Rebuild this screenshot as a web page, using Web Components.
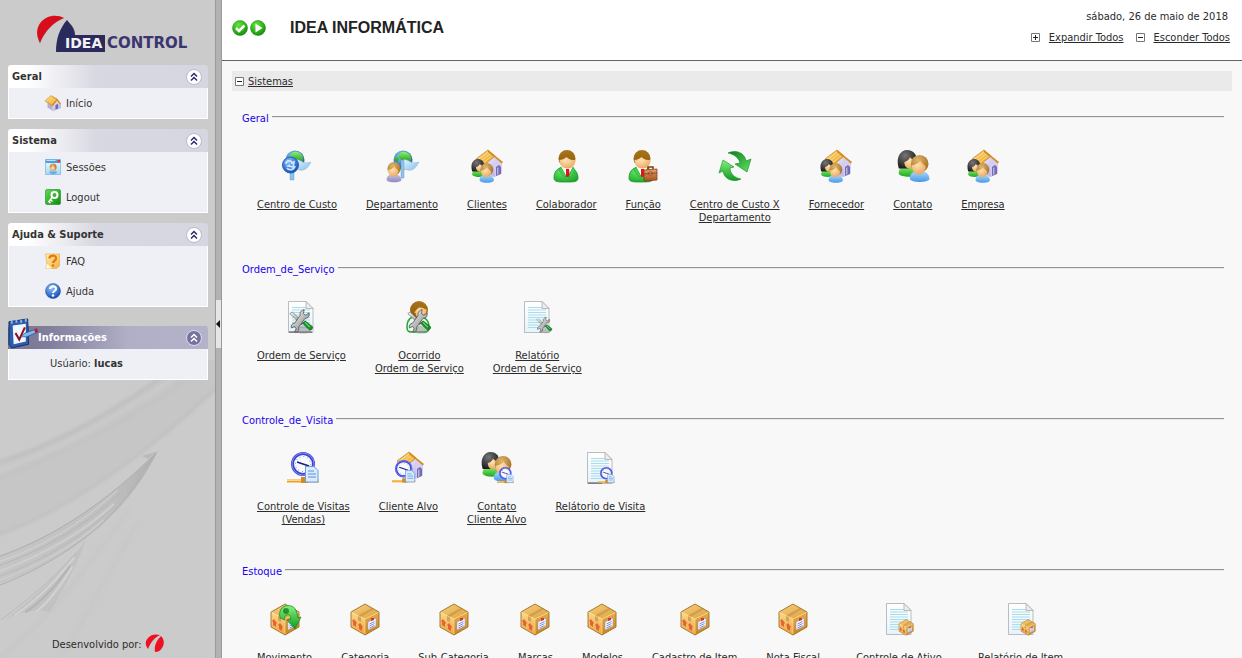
<!DOCTYPE html>
<html lang="pt-BR">
<head>
<meta charset="utf-8">
<meta name="viewport" content="width=device-width, initial-scale=1">
<title>IDEA Control</title>
<style>
html, body { height: 100%; margin: 0; }
body {
  background: #f8f8f8;
  color: #2b2b2b;
  font: 11px/13px "DejaVu Sans Condensed", "DejaVu Sans", Tahoma, sans-serif;
}
</style>
</head>
<body>
<idea-app>
  <idea-sidebar slot="side">
    <idea-panel heading="Geral">
      <idea-menu-item icon="home">Início</idea-menu-item>
    </idea-panel>
    <idea-panel heading="Sistema">
      <idea-menu-item icon="sessions">Sessões</idea-menu-item>
      <idea-menu-item icon="logout">Logout</idea-menu-item>
    </idea-panel>
    <idea-panel heading="Ajuda &amp; Suporte">
      <idea-menu-item icon="faq">FAQ</idea-menu-item>
      <idea-menu-item icon="help">Ajuda</idea-menu-item>
    </idea-panel>
    <idea-panel heading="Informações" featured>
      <idea-user>Usúario: <b>lucas</b></idea-user>
    </idea-panel>
  </idea-sidebar>
  <idea-header slot="header" heading="IDEA INFORMÁTICA" date="sábado, 26 de maio de 2018"></idea-header>
  <idea-tree heading="Sistemas">
    <idea-group heading="Geral">
      <idea-shortcut icon="costcenter">Centro de Custo</idea-shortcut>
      <idea-shortcut icon="department">Departamento</idea-shortcut>
      <idea-shortcut icon="clients">Clientes</idea-shortcut>
      <idea-shortcut icon="employee">Colaborador</idea-shortcut>
      <idea-shortcut icon="role">Função</idea-shortcut>
      <idea-shortcut icon="refresh">Centro de Custo X<br>Departamento</idea-shortcut>
      <idea-shortcut icon="clients">Fornecedor</idea-shortcut>
      <idea-shortcut icon="contact">Contato</idea-shortcut>
      <idea-shortcut icon="clients">Empresa</idea-shortcut>
    </idea-group>
    <idea-group heading="Ordem_de_Serviço">
      <idea-shortcut icon="order">Ordem de Serviço</idea-shortcut>
      <idea-shortcut icon="occurrence">Ocorrido<br>Ordem de Serviço</idea-shortcut>
      <idea-shortcut icon="orderreport">Relatório<br>Ordem de Serviço</idea-shortcut>
    </idea-group>
    <idea-group heading="Controle_de_Visita">
      <idea-shortcut icon="visit">Controle de Visitas<br>(Vendas)</idea-shortcut>
      <idea-shortcut icon="visitclient">Cliente Alvo</idea-shortcut>
      <idea-shortcut icon="visitcontact">Contato<br>Cliente Alvo</idea-shortcut>
      <idea-shortcut icon="visitreport">Relátorio de Visita</idea-shortcut>
    </idea-group>
    <idea-group heading="Estoque">
      <idea-shortcut icon="movement">Movimento</idea-shortcut>
      <idea-shortcut icon="box">Categoria</idea-shortcut>
      <idea-shortcut icon="box">Sub-Categoria</idea-shortcut>
      <idea-shortcut icon="box">Marcas</idea-shortcut>
      <idea-shortcut icon="box">Modelos</idea-shortcut>
      <idea-shortcut icon="box">Cadastro de Item</idea-shortcut>
      <idea-shortcut icon="box">Nota Fiscal</idea-shortcut>
      <idea-shortcut icon="itemreport" wide>Controle de Ativo</idea-shortcut>
      <idea-shortcut icon="itemreport">Relatório de Item</idea-shortcut>
    </idea-group>
  </idea-tree>
</idea-app>

<script>
/* ---------- icon artwork, on a 32 x 32 grid ---------- */
const lin = (id, a, b, d = '') =>
  `<linearGradient id="${id}" x1="0" y1="0" x2="${d ? 1 : 0}" y2="1"><stop stop-color="${a}"/><stop offset="1" stop-color="${b}"/></linearGradient>`;
const rad = (id, a, b) =>
  `<radialGradient id="${id}" cx=".4" cy=".3" r=".75"><stop stop-color="${a}"/><stop offset="1" stop-color="${b}"/></radialGradient>`;

const DEFS = '<defs>' +
  lin('roof', '#ffdc7c', '#e89a1c', 1) + lin('wall', '#f4f2ff', '#a9a2dc', 1) +
  rad('skin', '#ffe3b4', '#e9a55c') + lin('hairB', '#a87419', '#8c5a0c') + rad('hairK', '#777', '#151515') +
  rad('hairL', '#e0b66c', '#a06a1e') +
  lin('green', '#8cf070', '#20a824') + lin('blue', '#a8dcff', '#4c98e6') + lin('lilac', '#c9c4e4', '#9088bc') +
  rad('suit', '#6bf06a', '#1ea52c') + rad('orb', '#8fc4ff', '#0b46b0') + rad('earth', '#8fd0fa', '#0d49a0') +
  lin('land', '#8cf06c', '#128a18') + lin('flag', '#e4f6ff', '#84bce8', 1) +
  lin('arrow', '#86f27e', '#0f9a20') + lin('arrowD', '#0b7c18', '#5fe468', 1) +
  lin('page', '#ffffff', '#e6f3f8') + lin('case', '#e8a070', '#a8501c') +
  lin('boxT', '#f6cf80', '#dfa03c', 1) + lin('boxL', '#fbd78a', '#eba842') + lin('boxR', '#e6ac4c', '#c98420') +
  lin('metal', '#fafafa', '#7c7c7c', 1) + lin('note', '#fff0a8', '#f8b040', 1) +
  lin('key', '#5fdc50', '#0c8c10', 1) + lin('win', '#f4fcff', '#a4d8f4') +
  rad('go', '#62e83c', '#118a08') + '</defs>';

const at = (x, y, s, art) => `<g transform="translate(${x} ${y}) scale(${s})">${art}</g>`;

const bust = (hair, shirt) =>
  `<path d="M1 26c-1-6 4-9 10-9s11 3 11 9c-3 4-18 4-21 0z" fill="url(#${shirt})"/>
   <circle cx="11.500" cy="9.500" r="9.500" fill="url(#${hair})"/>
   <path d="M3 11c4 0 7-2 9-5 2 3 4 5 6 6 0 5-3 9-7.500 9S3 17 3 11z" fill="url(#skin)"/>`;

const bustDark =
  `<path d="M2 26c-1-6 4-9 10-9s11 3 11 9c-3 4-18 4-21 0z" fill="url(#green)"/>
   <path d="M2 20C-2 8 4 0 11 0c6 0 10 4 10 9l-8 11z" fill="url(#hairK)"/>
   <path d="M8 13c4-1 5-3 6-5 2 2 4 3 7 3 0 6-2 9-6 9-4 1-7-2-7-7z" fill="url(#skin)"/>`;

const house =
  `<path d="M12 14l11-7 8 6v10l-8 4-11-5z" fill="url(#wall)"/>
   <path d="M23 8l8 6v9l-7 4z" fill="#d4cff2"/>
   <path d="M25 17l3-2 2 2v7l-5 2z" fill="#736cae"/><path d="M26 18l1.500-1v7L26 25z" fill="#b9b3e2"/>
   <path d="M5 9L17 0l7 6-12 10z" fill="url(#roof)" stroke="#bd7b18" stroke-width=".7"/>
   <path d="M17 0l15 12-1 1.500L23 7l-6-5z" fill="#d58a1d"/>
   <path d="M8 9l9-7M10 11l9-7M12 13l9-7" stroke="#fff1b4" stroke-width=".8" opacity=".7"/>`;

const homeIcon =
  `<path d="M5 14l10 7v10L5 25z" fill="#b4aee0"/><path d="M14 20l10-10 7 8v8l-16 6z" fill="url(#wall)" stroke="#9d96cc" stroke-width=".6"/>
   <path d="M21 20l5-2v9l-5 2z" fill="#6e67ac"/>
   <path d="M0 12L12 1l13 8-10 13z" fill="url(#roof)" stroke="#c07c14"/>
   <path d="M12 1l13 7 7 9-2 2-6-8-8 11-2-2 9-11z" fill="#da8d1c"/>
   <path d="M4 12l9-8M8 14l9-8M12 17l8-9" stroke="#fff4bc" stroke-width="1.200" opacity=".8"/>`;

const globe =
  `<circle cx="14" cy="10" r="9.500" fill="url(#earth)"/>
   <path d="M11 3c4-3 10 0 11 4 1 3-1 6-3 5-1 3-3 1-4-1-3 0-3-2-5-3-1-2-1-4 1-5zM5 9l3-3 2 3-2 3z" fill="url(#land)"/>`;
const flag =
  `<path d="M14 10c6-2 7 5 16 2-2 4-5 8-8 8-3 1-5-1-8-1z" fill="url(#flag)" stroke="#86b7dc" stroke-width=".5"/>`;

const employee =
  `<path d="M4 28c0-8 5-11 12-11s12 4 12 11c0 4-4 4-12 4s-12 0-12-4z" fill="url(#suit)" stroke="#1a9428" stroke-width=".8"/>
   <path d="M11 17h12l-6 11z" fill="#fff"/><path d="M16 19h3l1 8h-4z" fill="#e2131c"/>
   <path d="M11 17l6 11-4-2-4-6zM23 17l-5 11 4-2 3-6z" fill="#49cf50" stroke="#1b9a2b" stroke-width=".5"/>
   <circle cx="17" cy="8.500" r="8.500" fill="url(#hairB)"/>
   <path d="M9.500 10c2 0 5-1 7-3 3 3 6 3 9 3 0 5-3.500 8.500-8 8.500S9.500 15 9.500 10z" fill="url(#skin)"/>`;

const lines = y => { let s = ''; for (let i = y; i < 28; i += 2.5) s += `<path d="M7 ${i}h18" stroke="#a9dced" stroke-width="1"/>`; return s; };
const page =
  `<path d="M3.500.5H21l7 7V31.500H3.500z" fill="url(#page)" stroke="#b9bcc0"/>
   ${lines(6.5)}
   <path d="M21 .5l7 7h-7z" fill="#eee" stroke="#aaa" stroke-width=".8"/>`;

const tools =
  `<ellipse cx="18" cy="27" rx="10" ry="5" fill="#888" opacity=".5"/>
   <path d="M1 7l3-2 14 13-2 3z" fill="url(#metal)" stroke="#555" stroke-width=".7"/>
   <path d="M17 19l3-3 9 7c2 2-2 6-4 4z" fill="#189028" stroke="#0b5a14" stroke-width=".8"/>
   <path d="M20 18l6 6" stroke="#72e26e" stroke-width="1.300"/>
   <path d="M19 2c-4 1-6 4-5 7l-7 10c-3 0-5 3-4 6l4-2 2 3-2 4c4 1 6-3 5-6l8-11c4 0 6-3 5-7l-4 3-3-2z" fill="url(#metal)" stroke="#444" stroke-width=".9"/>`;

const clock =
  `<path d="M0 27.500h32v3H0z" fill="#eda12c"/><path d="M0 28.500h32" stroke="#ffdb85"/><path d="M14 25h7v6h-7z" fill="#d68b18"/>
   <circle cx="16" cy="12" r="10.500" fill="#f7faff" stroke="#3a41d4" stroke-width="3"/>
   <circle cx="16" cy="12" r="11" fill="none" stroke="#9a9dff" stroke-width=".8"/>
   <circle cx="16" cy="12" r="7.500" fill="none" stroke="#7b86d0" stroke-width="1" stroke-dasharray="1 2.930"/>
   <path d="M10 10l6 2 6 2" fill="none" stroke="#1c2070" stroke-width="1.500"/>
   <path d="M18.500 14.500H27l4 4V30H18.500z" fill="#d9ecff" stroke="#6b9be0"/>
   <path d="M21 19h6M21 22h8M21 25h8" stroke="#5d90da"/>`;

const box =
  `<path d="M16 1l14 8-14 7L2 9z" fill="url(#boxT)"/><path d="M2 9l14 7v16L2 24z" fill="url(#boxL)"/>
   <path d="M30 9l-14 7v16l14-8z" fill="url(#boxR)"/>
   <path d="M9 12.500L23 5l2 1-13 8v5l-3-1.500z" fill="#c99545" opacity=".75"/>
   <path d="M3 18l2-2 3 4-1 1v3l-3-2v-3zM9 22l2-2 3 4-1 1v3l-3-2v-3z" fill="#e2542f" opacity=".85"/>
   <path d="M19 19l8-4v8l-8 4z" fill="#f4f5ff" stroke="#8f98c4" stroke-width=".5"/>
   <path d="M20.500 21l5-2.500M20.500 23l5-2.500M20.500 25l5-2.500" stroke="#6676c4" stroke-width=".8"/>
   <path d="M22 15h3v2l-3 1z" fill="#d43434"/>
   <path d="M16 1l14 8v15l-14 8L2 24V9z" fill="none" stroke="#a26d22" stroke-width=".9"/>
   <path d="M2.500 9.500L16 16l13.500-6.500M16 16v15" fill="none" stroke="#ffe5a4" stroke-width=".6"/>`;

const disc = inner => `<circle cx="16" cy="16" r="15" fill="url(#go)" stroke="#138006"/>${inner}`;

const ART = {
  home: homeIcon,
  sessions: `<path d="M1 1h30v30H1z" fill="url(#win)" stroke="#5aa0d0"/><path d="M1 1h30v7H1z" fill="#4f9fdc"/><path d="M25 2h5v5h-5z" fill="#e03a3a"/><path d="M3 3h18" stroke="#b9e2fb" stroke-width="2"/>` + at(8, 9, .72, bust('hairL', 'blue')),
  logout: `<rect x="1" y="1" width="30" height="30" rx="3" fill="url(#key)" stroke="#0c7410"/><circle cx="19" cy="12" r="6" fill="none" stroke="#fff" stroke-width="4"/><path d="M15 16l-8 10M10 21l5 4M7 25l4 3" stroke="#fff" stroke-width="3" fill="none"/>`,
  faq: `<path d="M1 2h28v24l-6 5H1l3-8z" fill="url(#note)" stroke="#dc9a30"/><path d="M1 31l4-9 9 9z" fill="#fffbe0"/><path d="M9 11c0-8 14-8 13 0 0 5-6 4-6 9" fill="none" stroke="#e07812" stroke-width="4.500"/><circle cx="16" cy="25" r="2.700" fill="#e07812"/>`,
  help: `<circle cx="16" cy="16" r="15" fill="url(#orb)" stroke="#184ca4"/><path d="M10 12c0-7 13-7 12 0 0 4-6 4-6 8" fill="none" stroke="#fff" stroke-width="4.200"/><circle cx="16" cy="25" r="2.500" fill="#fff"/>`,
  check: disc('<path d="M8 16l6 6 11-11" fill="none" stroke="#fff" stroke-width="5"/>'),
  play: disc('<path d="M11 7l14 9-14 9z" fill="#fff"/>'),
  notepad: `<path d="M1 4L21 1l1 27L4 32 1 28z" fill="#2b5cae" stroke="#12305f"/><path d="M5 8l14-2v19L6 28z" fill="#f2f7ff"/><path d="M3 3h2v3H3zM8 2h2v3H8zM13 2h2v3h-2zM18 1h2v3h-2z" fill="#8fb4ec"/><path d="M8 16l4 7 6-13" fill="none" stroke="#8c1020" stroke-width="2.200"/><path d="M14 20l4-4 12-4 2 3-12 5z" fill="#7db8ee" stroke="#2458a0" stroke-width=".8"/><path d="M28 12l3-1 1 4-3 1z" fill="#c41c24"/>`,
  costcenter: globe + flag + '<path d="M9 20h4v10H9z" fill="#8bc4ec" stroke="#5a96c8" stroke-width=".4"/><circle cx="9.500" cy="15" r="8" fill="url(#orb)" stroke="#2560b8"/><path d="M5 14c0-4 6-4 6-1l2-1-1 5-5-1 2-1M14 16c-1 4-6 5-8 2" fill="none" stroke="#cfe6ff" stroke-width="1.600"/>',
  department: at(3, 0, 1, globe + flag + '<path d="M12 10h3v18h-3z" fill="#8bc4ec" stroke="#5a96c8" stroke-width=".4"/>') + at(0, 12, .7, bust('hairL', 'lilac')),
  clients: house + at(0, 9, .62, bustDark) + at(8, 13, .68, bust('hairL', 'blue')),
  employee: employee,
  role: at(-2, 0, 1, employee) + '<path d="M21 19v-2h5v2" fill="none" stroke="#7c3a14" stroke-width="1.500"/><path d="M17 20l13-1v11l-13 1z" fill="url(#case)" stroke="#8a4317" stroke-width=".8"/><path d="M17 24l13-1M22 22h3v3h-3z" stroke="#7a3a12" fill="#f3c27a" stroke-width=".7"/>',
  contact: at(0, 0, .92, bustDark) + at(12, 5, .93, bust('hairL', 'blue')),
  refresh: `<path d="M9 3c8-4 17 0 18 8l5-2-4 13-12-8 5-1C20 8 15 4 9 3z" fill="url(#arrowD)" stroke="#0e8a1e" stroke-width=".6"/><path d="M22 29c-8 4-17 0-18-8l-4 2L4 10l11 7-4 1c0 6 5 10 11 11z" fill="url(#arrow)" stroke="#0e8a1e" stroke-width=".6"/>`,
  order: page + '<path d="M4 31h23" stroke="#444"/>' + at(4, 7, .8, tools),
  occurrence: `<path d="M4 26c0-8 5-11 11-11s11 4 11 11c0 6-3 5-11 5s-11 1-11-5z" fill="#eafaea" stroke="#28a838" stroke-width="1.500"/><circle cx="16" cy="9" r="9" fill="url(#hairB)"/><path d="M11 12h12c1-3 1-4 0-4-3 0-5 0-7-2-2 3-4 3-5 6z" fill="#e9a55c"/><circle cx="18" cy="12" r="5.500" fill="url(#skin)"/>` + at(4, 7, .8, tools),
  orderreport: page + at(15, 15, .54, tools),
  visit: clock,
  visitclient: house + at(0, 8, .73, clock),
  visitcontact: at(0, 0, .85, bustDark) + at(12, 4, .88, bust('hairL', 'blue')) + at(16, 15, .52, clock),
  visitreport: page + '<path d="M4 31h14" stroke="#444"/>' + at(14, 15, .52, clock),
  box: box,
  movement: box + '<path d="M11 15c-2-9 4-14 11-12 5 1 6 7 7 12l3-1-6 12-8-9 4-1c-1-4-2-5-4-4-2 0-3 3-2 5z" fill="url(#arrow)" stroke="#108820" stroke-width=".7"/><circle cx="17" cy="8" r="3" fill="#0a7418" opacity=".7"/>',
  itemreport: page + at(15, 16, .51, box),
};

const plusMinus = plus =>
  `<svg class="pm" width="9" height="9" viewBox="0 0 9 9" aria-hidden="true"><path d="M.5.5h8v8h-8z" fill="#fff" stroke="#777"/><path d="M2 4.500h5${plus ? 'M4.500 2v5' : ''}" stroke="#222" fill="none"/></svg>`;

class Base extends HTMLElement {
  connectedCallback() {
    if (this.shadowRoot) return;
    this.attachShadow({ mode: 'open' }).innerHTML = this.render();
  }
}

/* ---------- elements ---------- */
customElements.define('idea-icon', class extends Base {
  render() {
    return `<style>:host { display: block; width: var(--icon, 32px); height: var(--icon, 32px); flex: none; }
      svg { display: block; width: 100%; height: 100%; overflow: visible; }</style>
      <svg viewBox="0 0 32 32" aria-hidden="true">${DEFS}${ART[this.getAttribute('name')] || ''}</svg>`;
  }
});

customElements.define('idea-app', class extends Base {
  render() {
    return `<style>
      :host { display: grid; grid-template-columns: 215px 7px minmax(0, 1fr); height: 100vh; overflow: hidden; }
      .split { box-sizing: border-box; background: #b2b2b2; border: solid #9a9a9a; border-width: 0 1px; display: flex; align-items: center; }
      .split button { width: 100%; height: 48px; margin: 0 0 10px; padding: 0; border: 0; background: #e6e6e6; display: flex; align-items: center; }
      main { display: flex; flex-direction: column; min-width: 0; height: 100vh; }
      .body { flex: 1; min-height: 0; overflow: auto; scrollbar-width: none; background: #f8f8f8; padding: 10px; }
    </style>
    <slot name="side"></slot>
    <div class="split"><button aria-label="Recolher menu"><svg width="4" height="8" viewBox="0 0 4 8"><path d="M4 0v8L0 4z" fill="#111"/></svg></button></div>
    <main><slot name="header"></slot><div class="body"><slot></slot></div></main>`;
  }
});

customElements.define('idea-sidebar', class extends Base {
  render() {
    return `<style>
      :host { display: flex; flex-direction: column; position: relative; overflow: hidden; background: #cbcbcb; height: 100vh; box-sizing: border-box; padding: 14px 7px 4px 8px; }
      .waves { position: absolute; left: 0; bottom: 0; width: 215px; height: 298px; }
      .logo { display: block; width: 156px; height: 40px; margin: 0 0 11px 28px; }
      nav { display: flex; flex-direction: column; gap: 10px; position: relative; }
      footer { margin-top: auto; padding-left: 44px; display: flex; align-items: center; gap: 3px; position: relative; height: 20px; }
      footer svg { display: block; }
    </style>
    <svg class="waves" viewBox="0 360 215 298" aria-hidden="true">
      <defs>
        <filter id="soft"><feGaussianBlur stdDeviation="1.500"/></filter>
        <filter id="fine"><feGaussianBlur stdDeviation=".5"/></filter>
        <linearGradient id="w2" x1="0" y1="0" x2="1" y2="0"><stop stop-color="#c2c2c2"/><stop offset=".7" stop-color="#b8b8b8"/><stop offset="1" stop-color="#9c9c9c"/></linearGradient>
      </defs>
      <g filter="url(#soft)">
        <path d="M-5 462C70 435 130 400 185 355h40v27C160 450 70 505-5 537z" fill="#c6c6c6"/>
        <g fill="none" stroke-width="3">
          <path d="M-5 463C60 444 120 408 172 370" stroke="#bfbfbf"/><path d="M-5 472C60 450 125 414 190 366" stroke="#cccccc"/>
          <path d="M-5 480C60 456 130 422 200 370" stroke="#c2c2c2"/>
          <path d="M-5 536C70 510 150 452 218 385" stroke="#c1c1c1"/>
          <path d="M0 658C60 610 90 560 130 510M60 658C90 610 110 570 140 520" stroke="#c6c6c6" stroke-width="6" opacity=".6"/>
        </g>
      </g>
      <g filter="url(#fine)">
        <path d="M158 451C130 505 90 550-2 585v-29C60 535 115 495 158 451z" fill="url(#w2)" opacity=".6"/>
        <path d="M142 456l16-5-10 8z" fill="#bbb"/>
        <g fill="none">
          <path d="M-2 557C60 535 110 498 156 453" stroke="#adadad"/><path d="M-2 562C50 545 90 516 118 490" stroke="#d2d2d2"/>
          <path d="M-2 566C50 548 92 520 120 493" stroke="#b4b4b4"/><path d="M-2 572C48 553 88 528 114 504" stroke="#cecece" stroke-width="2"/>
          <path d="M-2 577C50 558 88 532 114 507" stroke="#b8b8b8"/><path d="M-2 581C46 563 80 541 104 520" stroke="#cbcbcb" stroke-width="2"/>
          <path d="M-2 586C60 562 110 525 140 478" stroke="#b0b0b0"/>
        </g>
        <path d="M4 621C35 597 62 572 86 540 78 563 66 585 50 612 38 608 18 612 4 621z" fill="#bdbdbd" opacity=".6"/>
        <g fill="none" stroke-linecap="round"><path d="M2 619C35 595 58 573 76 553" stroke="#b9b9b9"/><path d="M15 615C42 597 58 577 74 558" stroke="#d2d2d2" stroke-width="2"/>
          <path d="M26 612C46 598 58 583 70 566" stroke="#b3b3b3" stroke-width="2"/><path d="M37 611C52 599 62 584 72 567" stroke="#d3d3d3" stroke-width="2"/></g>
      </g>
    </svg>
    <svg class="logo" viewBox="36 14 156 40" role="img" aria-label="IDEA Control">
      <path d="M40 44c-3-7-4-14 1-21 6-8 16-8 23-5-10 4-19 13-24 26z" fill="#888" opacity=".5"/>
      <path d="M40 43c-4-8-4-15 1-21 6-7 16-8 23-4-10 4-19 12-24 25z" fill="#d80d1c"/>
      <path d="M67 20l5 6c2 3 3 6 3 9h30v17H56c0-14 4-24 11-32z" fill="#2b2a5c"/>
      <text x="65" y="48" font-family="DejaVu Sans, Verdana, sans-serif" font-weight="bold" font-size="14" fill="#f2f2f6">IDEA</text>
      <text x="107" y="48" font-family="DejaVu Sans, Verdana, sans-serif" font-weight="bold" font-size="15" fill="#3c3670">CONTROL</text>
    </svg>
    <nav><slot></slot></nav>
    <footer><span>Desenvolvido por:</span>
      <svg width="20" height="20" viewBox="0 0 20 20" role="img" aria-label="IDEA"><path d="M3 15C0 11 0 7 3 4c3-4 8-4 12-3C9 4 6 8 3 15z" fill="#ee1020"/><path d="M10 18C9 12 11 7 16 2c3 3 4 8 1 12-2 3-4 4-7 4z" fill="#ee1020"/></svg>
    </footer>`;
  }
});

customElements.define('idea-panel', class extends Base {
  render() {
    const f = this.hasAttribute('featured');
    return `<style>
      :host { display: block; }
      :host([featured]) { margin-top: 9px; }
      header { box-sizing: border-box; height: 23px; display: flex; align-items: center; justify-content: space-between; padding: 0 6px 0 4px; border-radius: 3px 3px 0 0;
        background: linear-gradient(90deg, #fff 0, #fff 20px, #d8d8e2 88px, #d6d6e0 100%); color: #333; }
      :host([featured]) header { background: linear-gradient(90deg, #767492 0, #807e9c 40px, #b0afc6 120px, #b3b2c8 100%); color: #fff; padding-left: 0; }
      h2 { margin: 0; font-size: 11px; line-height: 13px; font-weight: bold; display: flex; align-items: center; }
      idea-icon { --icon: 30px; margin-top: -10px; }
      button { padding: 0; border: 0; background: none; width: 16px; height: 16px; }
      svg { display: block; overflow: visible; }
      .body { background: #eff0f5; border: solid #fff; border-width: 0 1px 1px; }
    </style>
    <header><h2>${f ? '<idea-icon name="notepad"></idea-icon>' : ''}<span>${this.getAttribute('heading').replace('&', '&amp;')}</span></h2>
      <button aria-label="Recolher"><svg width="16" height="16" viewBox="0 0 16 16"><circle cx="8" cy="8" r="7.500" fill="${f ? '#7473a0' : '#fff'}" stroke="${f ? '#dcdcf0' : '#b9b9cc'}"/><path d="M5 7.500l3-3 3 3M5 11.500l3-3 3 3" fill="none" stroke="${f ? '#fff' : '#2b2b6a'}" stroke-width="1.500"/></svg></button></header>
    <div class="body"><slot></slot></div>`;
  }
});

customElements.define('idea-menu-item', class extends Base {
  render() {
    return `<style>:host { display: block; --icon: 16px; }
      a { display: flex; align-items: center; gap: 5px; height: 30px; padding-left: 36px; color: #333; text-decoration: none; }</style>
      <a href="#"><idea-icon name="${this.getAttribute('icon')}"></idea-icon><span><slot></slot></span></a>`;
  }
});

customElements.define('idea-user', class extends Base {
  render() {
    return `<style>:host { display: block; line-height: 30px; padding-left: 41px; color: #333; }</style><slot></slot>`;
  }
});

customElements.define('idea-header', class extends Base {
  render() {
    return `<style>
      :host { display: flex; justify-content: space-between; flex: none; box-sizing: border-box; height: 61px; padding: 0 12px 0 10px; background: #fff; border-bottom: 1px solid #666; }
      .brand { display: flex; align-items: center; height: 56px; gap: 2px; --icon: 16px; }
      h1 { margin: 0 0 0 22px; font: bold 16px/20px "Liberation Sans", Arial, sans-serif; color: #222; }
      .tools { display: flex; flex-direction: column; align-items: flex-end; gap: 8px; padding-top: 10px; }
      time { padding-right: 2px; }
      .links { display: flex; gap: 12px; }
      a { display: flex; align-items: center; gap: 9px; color: inherit; text-decoration: none; }
      a span { text-decoration: underline; }
    </style>
    <div class="brand"><idea-icon name="check"></idea-icon><idea-icon name="play"></idea-icon><h1>${this.getAttribute('heading')}</h1></div>
    <div class="tools"><time datetime="2018-05-26">${this.getAttribute('date')}</time>
      <div class="links"><a href="#">${plusMinus(true)}<span>Expandir Todos</span></a><a href="#">${plusMinus(false)}<span>Esconder Todos</span></a></div></div>`;
  }
});

customElements.define('idea-tree', class extends Base {
  render() {
    return `<style>
      :host { display: block; }
      .bar { display: flex; align-items: center; gap: 4px; height: 20px; padding-left: 3px; background: #eaeaea; color: inherit; text-decoration: none; }
      .bar span { text-decoration: underline; }
      .groups { padding: 18px 8px 0; display: flex; flex-direction: column; gap: 36px; }
    </style>
    <a class="bar" href="#">${plusMinus(false)}<span>${this.getAttribute('heading')}</span></a>
    <div class="groups"><slot></slot></div>`;
  }
});

customElements.define('idea-group', class extends Base {
  render() {
    return `<style>
      :host { display: block; }
      fieldset { margin: 0; padding: 0; border: 0; border-top: 2px groove #e8e8e8; min-width: 0; }
      legend { padding: 3px 3px 0 2px; color: #2000f0; line-height: 13px; }
      .row { display: flex; align-items: flex-start; gap: 29px; padding: 25px 17px 0; min-height: 74px; }
    </style>
    <fieldset><legend>${this.getAttribute('heading')}</legend><div class="row"><slot></slot></div></fieldset>`;
  }
});

customElements.define('idea-shortcut', class extends Base {
  render() {
    return `<style>:host { display: block; flex: none; }
      :host([wide]) { min-width: 100px; }
      a { display: flex; flex-direction: column; align-items: center; gap: 16px; color: inherit; text-align: center; white-space: nowrap; text-decoration: none; }
      span { text-decoration: underline; }</style>
      <a href="#"><idea-icon name="${this.getAttribute('icon')}"></idea-icon><span><slot></slot></span></a>`;
  }
});
</script>
</body>
</html>
